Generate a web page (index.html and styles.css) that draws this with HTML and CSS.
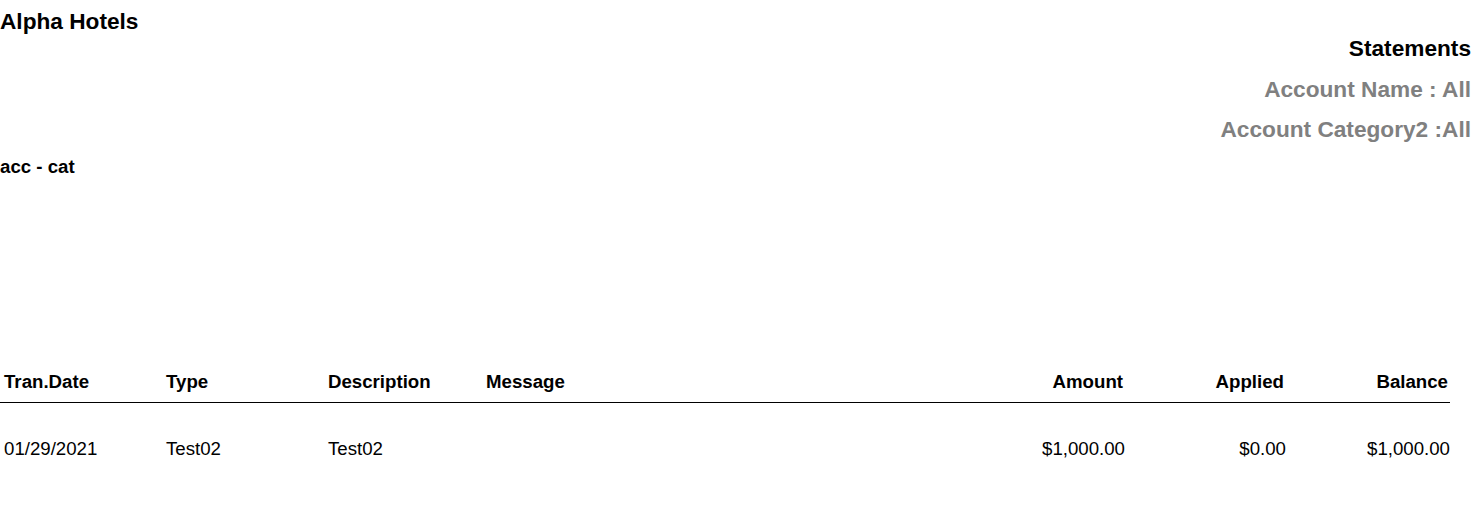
FILE: index.html
```html
<!DOCTYPE html>
<html>
<head>
<meta charset="utf-8">
<title>Statements</title>
<link rel="stylesheet" href="styles.css">
</head>
<body>
<div class="report">
  <div class="company">Alpha Hotels</div>
  <div class="titles">
    <div class="title">Statements</div>
    <div class="filter filter-first">Account Name : All</div>
    <div class="filter">Account Category2 :All</div>
  </div>
  <div class="group">acc - cat</div>
  <table class="grid">
    <colgroup>
      <col class="c-date"><col class="c-type"><col class="c-desc"><col class="c-msg"><col class="c-amt"><col class="c-app"><col class="c-bal">
    </colgroup>
    <thead>
      <tr>
        <th>Tran.Date</th>
        <th>Type</th>
        <th>Description</th>
        <th>Message</th>
        <th class="num">Amount</th>
        <th class="num">Applied</th>
        <th class="num">Balance</th>
      </tr>
    </thead>
    <tbody>
      <tr>
        <td>01/29/2021</td>
        <td>Test02</td>
        <td>Test02</td>
        <td></td>
        <td class="num">$1,000.00</td>
        <td class="num">$0.00</td>
        <td class="num">$1,000.00</td>
      </tr>
    </tbody>
  </table>
</div>
</body>
</html>
```

FILE: styles.css
```css
html, body {
  margin: 0;
  padding: 0;
  background: #ffffff;
}
body {
  font-family: "Liberation Sans", Arial, sans-serif;
  color: #000000;
}
.report {
  width: 1477px;
  padding-top: 8px;
}
.company {
  font-size: 22.67px;
  font-weight: bold;
  line-height: 26px;
  height: 26px;
}
.titles {
  text-align: right;
  padding-right: 6px;
  font-weight: bold;
  font-size: 22.67px;
}
.title {
  line-height: 28px;
}
.filter {
  color: #808080;
  line-height: 40px;
}
.filter-first {
  margin-top: 7px;
}
.group {
  font-size: 18.67px;
  font-weight: bold;
  line-height: 24px;
  margin-top: 6px;
}
.grid {
  width: 1450px;
  border-collapse: collapse;
  table-layout: fixed;
  margin-top: 183px;
  font-size: 18.67px;
}
.c-date { width: 162px; }
.c-type { width: 162px; }
.c-desc { width: 158px; }
.c-msg { width: auto; }
.c-amt { width: 150px; }
.c-app { width: 161px; }
.c-bal { width: 164px; }
.grid th {
  font-weight: bold;
  text-align: left;
  height: 40px;
  padding: 0 0 0 4px;
  border-bottom: 1px solid #000000;
  vertical-align: middle;
}
.grid td {
  height: 92px;
  padding: 0 0 0 4px;
  vertical-align: middle;
}
.grid th.num {
  text-align: right;
  padding-right: 2px;
}
.grid td.num {
  text-align: right;
  padding-right: 0;
}
```
